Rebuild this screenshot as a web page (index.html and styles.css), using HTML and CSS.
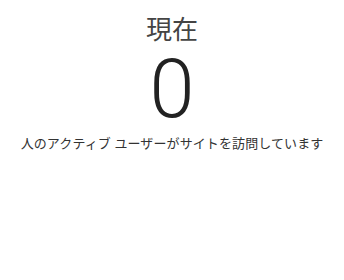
FILE: index.html
```html
<!DOCTYPE html>
<html lang="ja">
<head>
<meta charset="utf-8">
<link rel="stylesheet" href="styles.css">
</head>
<body>
<div class="widget">
  <div class="title">現在</div>
  <div class="count">0</div>
  <div class="caption">人のアクティブ ユーザーがサイトを訪問しています</div>
</div>
</body>
</html>
```
FILE: styles.css
```css
html, body {
  margin: 0;
  padding: 0;
  background: #ffffff;
}
.widget {
  display: flex;
  flex-direction: column;
  align-items: center;
  padding-top: 14px;
  font-family: "Open Sans", "Noto Sans CJK JP", sans-serif;
}
.title {
  font-size: 26px;
  line-height: 30px;
  color: #444444;
}
.count {
  font-family: Roboto, "Open Sans", sans-serif;
  font-size: 81px;
  line-height: 80px;
  font-weight: 300;
  color: #222222;
  margin-top: 6px;
}
.caption {
  font-size: 13px;
  line-height: 18px;
  letter-spacing: 0.1px;
  color: #333333;
  margin-top: 4px;
}
```
